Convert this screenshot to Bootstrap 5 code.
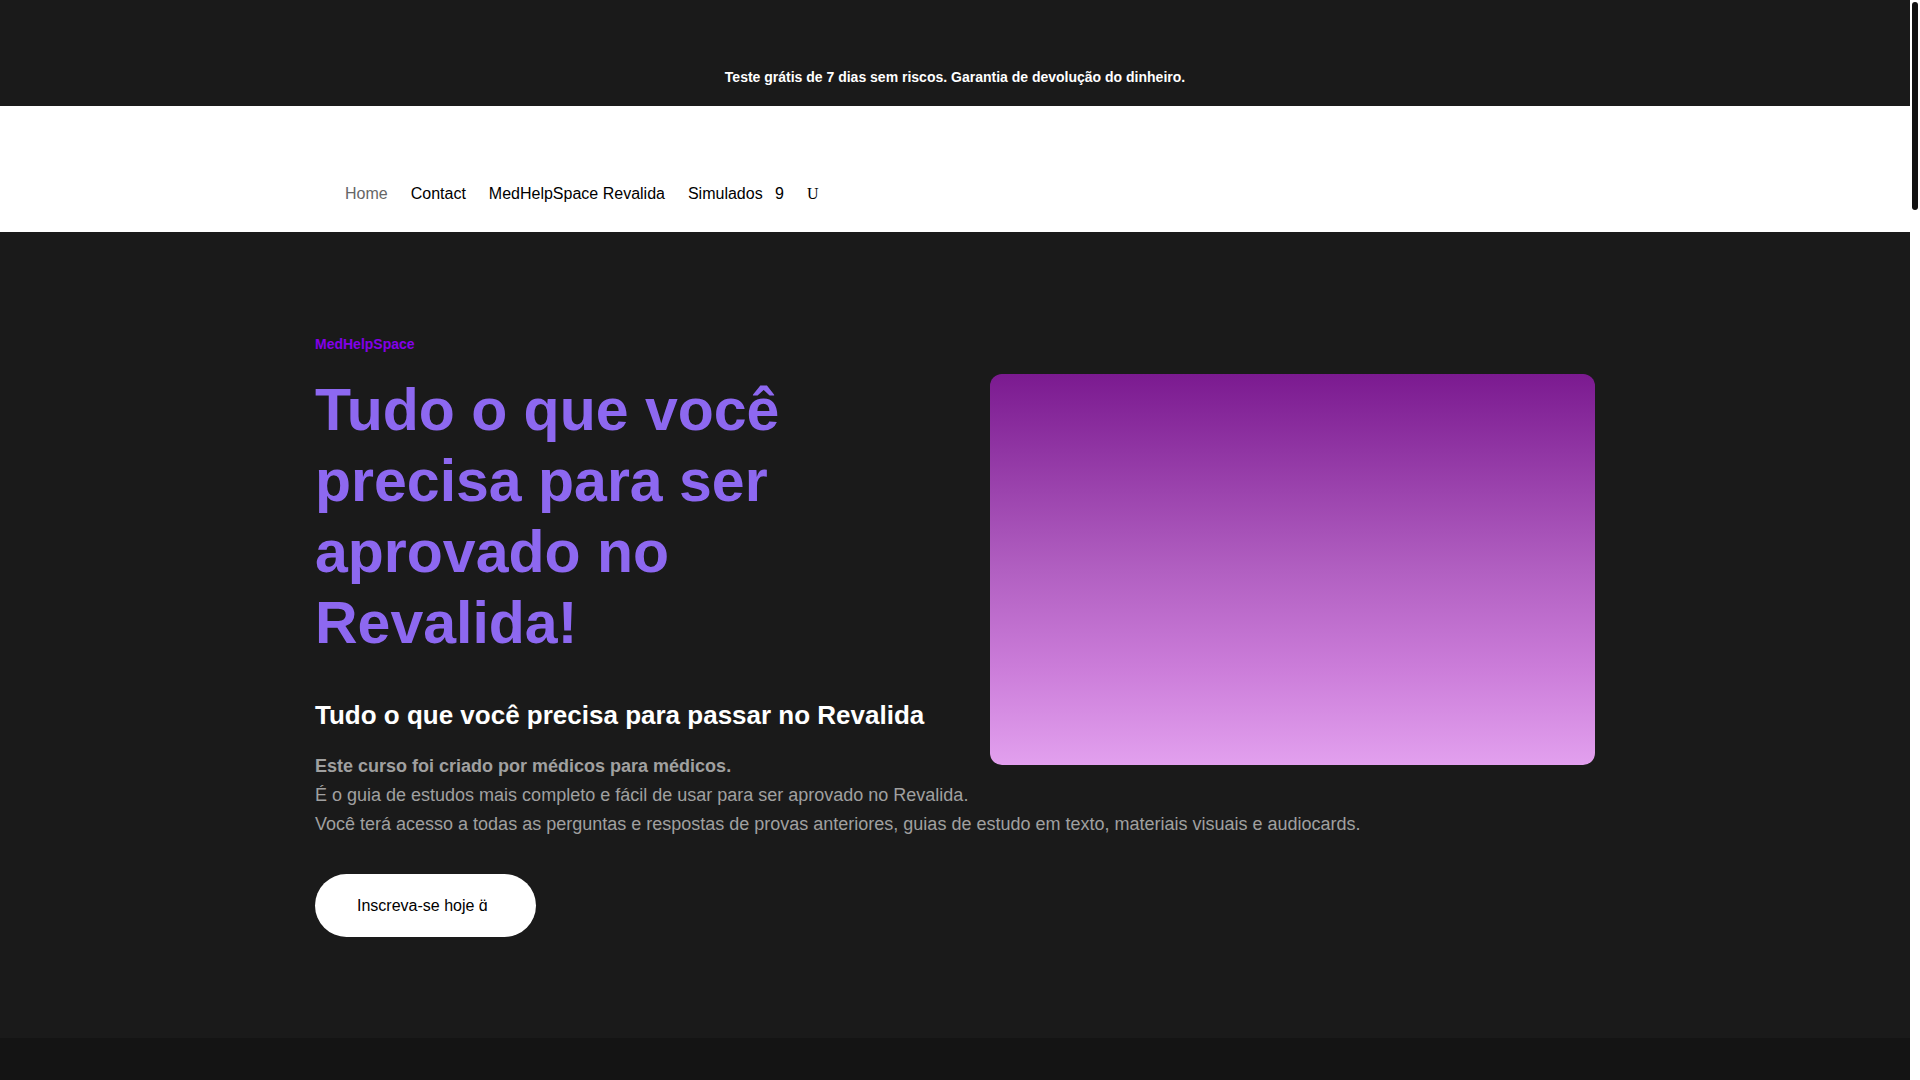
<!DOCTYPE html>
<html lang="pt-BR">
<head>
<meta charset="utf-8">
<meta name="viewport" content="width=device-width, initial-scale=1">
<title>MedHelpSpace</title>
<link href="https://cdn.jsdelivr.net/npm/bootstrap@5.3.0/dist/css/bootstrap.min.css" rel="stylesheet">
<style>
html { scrollbar-width: none; }
body { font-family: "Liberation Sans", Arial, sans-serif; background: #141414; color: #fff; padding-right: 10px; }
.promo-bar { background: #1a1a1a; padding: 66px 16px 18px; font-size: 14px; line-height: 22px; }
.page-wrap { width: 80%; max-width: 1280px; margin: 0 auto; }
.site-header { padding: 75px 0 25px; }
.main-menu { margin-left: 30px; gap: 23px; line-height: 26px; }
.main-menu a { color: #000; text-decoration: none; }
.main-menu a.active { color: #666; }
.menu-arrow { margin-left: 8px; }
.search-toggle { font-family: "Liberation Serif", serif; font-size: 16px; line-height: 26px; color: #000; }
.hero { background: #1a1a1a; padding: 100px 0 101px; }
.eyebrow { color: #8300e9; font-size: 14px; line-height: 24px; margin-bottom: 19px; }
.hero h1 { color: #8d68f0; font-size: 59px; line-height: 71px; font-weight: 700; max-width: 520px; margin: 0 0 38px; }
.hero h2 { font-size: 26px; line-height: 36px; font-weight: 700; margin: 0 0 19px; }
.hero-text { color: #a0a0a0; font-size: 18px; line-height: 29px; margin: 0 0 35px; }
.visual { float: right; width: 605px; height: 391px; margin-top: 42px; border-radius: 12px; background: linear-gradient(#7b1a90, #b15fc1 50%, #cb7cd9 75%, #e2a0ee); }
.cta { background: #fff; color: #000; border: 0; border-radius: 32px; padding: 19px 48px 19px 42px; font-size: 16px; line-height: 25px; }
.scroll-rail { position: fixed; top: 0; right: 0; bottom: 0; width: 10px; background: #fff; }
.scroll-thumb { position: absolute; top: 2px; left: 2px; width: 6px; height: 208px; border-radius: 3px; background: #111; }
</style>
<script src="https://cdn.jsdelivr.net/npm/bootstrap@5.3.0/dist/js/bootstrap.bundle.min.js"></script>
</head>
<body>
<div class="promo-bar text-center fw-bold">Teste grátis de 7 dias sem riscos. Garantia de devolução do dinheiro.</div>
<header class="site-header bg-white">
  <div class="page-wrap">
    <nav class="main-menu d-flex align-items-center" aria-label="Principal">
      <a class="active" href="#">Home</a>
      <a href="#">Contact</a>
      <a href="#">MedHelpSpace Revalida</a>
      <a href="#">Simulados <span class="menu-arrow">9</span></a>
      <button class="search-toggle border-0 bg-transparent p-0" type="button">U</button>
    </nav>
  </div>
</header>
<main class="hero">
  <div class="page-wrap">
    <div class="visual"></div>
    <p class="eyebrow fw-bold">MedHelpSpace</p>
    <h1>Tudo o que você precisa para ser aprovado no Revalida!</h1>
    <h2>Tudo o que você precisa para passar no Revalida</h2>
    <p class="hero-text"><strong>Este curso foi criado por médicos para médicos.</strong><br>É o guia de estudos mais completo e fácil de usar para ser aprovado no Revalida.<br>Você terá acesso a todas as perguntas e respostas de provas anteriores, guias de estudo em texto, materiais visuais e audiocards.</p>
    <button class="cta" type="button">Inscreva-se hoje ɑ̈</button>
  </div>
</main>
<div class="scroll-rail" aria-hidden="true"><div class="scroll-thumb"></div></div>
</body>
</html>
